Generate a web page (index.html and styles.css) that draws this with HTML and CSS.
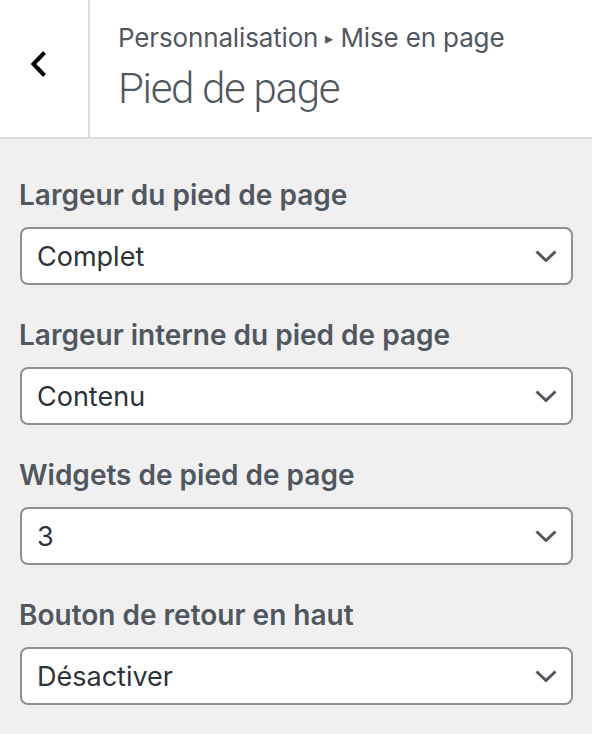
FILE: index.html
```html
<!DOCTYPE html>
<html lang="fr">
<head>
<meta charset="utf-8">
<title>Pied de page</title>
<link rel="stylesheet" href="styles.css">
</head>
<body>
<header class="head">
  <div class="back">
    <svg class="back-icon" width="18" height="28" viewBox="0 0 18 28"><polyline points="14.5,2.5 3.5,14 14.5,25.5" fill="none" stroke="#000" stroke-width="4"/></svg>
  </div>
  <div class="titles">
    <div class="crumb">Personnalisation <span class="tri">▸</span> Mise en page</div>
    <div class="title">Pied de page</div>
  </div>
</header>
<main class="controls">
  <div class="control">
    <div class="label">Largeur du pied de page</div>
    <div class="select"><span>Complet</span><svg class="chev" width="22" height="13" viewBox="0 0 22 13"><polyline points="1.5,1.5 11,10.5 20.5,1.5" fill="none" stroke="#50575e" stroke-width="3"/></svg></div>
  </div>
  <div class="control">
    <div class="label">Largeur interne du pied de page</div>
    <div class="select"><span>Contenu</span><svg class="chev" width="22" height="13" viewBox="0 0 22 13"><polyline points="1.5,1.5 11,10.5 20.5,1.5" fill="none" stroke="#50575e" stroke-width="3"/></svg></div>
  </div>
  <div class="control">
    <div class="label">Widgets de pied de page</div>
    <div class="select"><span>3</span><svg class="chev" width="22" height="13" viewBox="0 0 22 13"><polyline points="1.5,1.5 11,10.5 20.5,1.5" fill="none" stroke="#50575e" stroke-width="3"/></svg></div>
  </div>
  <div class="control">
    <div class="label">Bouton de retour en haut</div>
    <div class="select"><span>Désactiver</span><svg class="chev" width="22" height="13" viewBox="0 0 22 13"><polyline points="1.5,1.5 11,10.5 20.5,1.5" fill="none" stroke="#50575e" stroke-width="3"/></svg></div>
  </div>
</main>
</body>
</html>
```
FILE: styles.css
```css
html, body {
  margin: 0;
  padding: 0;
}
body {
  background: #f0f0f1;
  font-family: Inter, "Liberation Sans", sans-serif;
  width: 592px;
  height: 734px;
  overflow: hidden;
}
.head {
  display: flex;
  height: 137px;
  background: #fff;
  border-bottom: 2px solid #dcdcde;
}
.back {
  box-sizing: border-box;
  width: 90px;
  border-right: 2px solid #dcdcde;
  display: flex;
  align-items: center;
  justify-content: center;
  padding-right: 10px;
}
.back-icon {
  display: block;
  margin-top: -10px;
}
.titles {
  padding-left: 28px;
  padding-top: 20px;
  color: #50575e;
}
.crumb {
  font-size: 26px;
  line-height: 36px;
  letter-spacing: -0.15px;
}
.tri {
  font-size: 16px;
  vertical-align: 3px;
}
.title {
  font-family: Roboto, "Liberation Sans", sans-serif;
  font-size: 42px;
  line-height: 52px;
  font-weight: 300;
  letter-spacing: -1.3px;
  margin-top: 7px;
}
.controls {
  padding: 36px 19px 0 20px;
}
.control {
  margin-bottom: 30px;
}
.label {
  font-size: 28px;
  line-height: 40px;
  font-weight: 600;
  color: #50575e;
  margin-left: -1px;
  margin-bottom: 12px;
}
.select {
  box-sizing: border-box;
  height: 58px;
  background: #fff;
  border: 2px solid #8c8f94;
  border-radius: 8px;
  display: flex;
  align-items: center;
  justify-content: space-between;
  padding: 0 14px 0 15px;
  font-size: 27px;
  color: #2c3338;
}
.chev {
  display: block;
}
```
